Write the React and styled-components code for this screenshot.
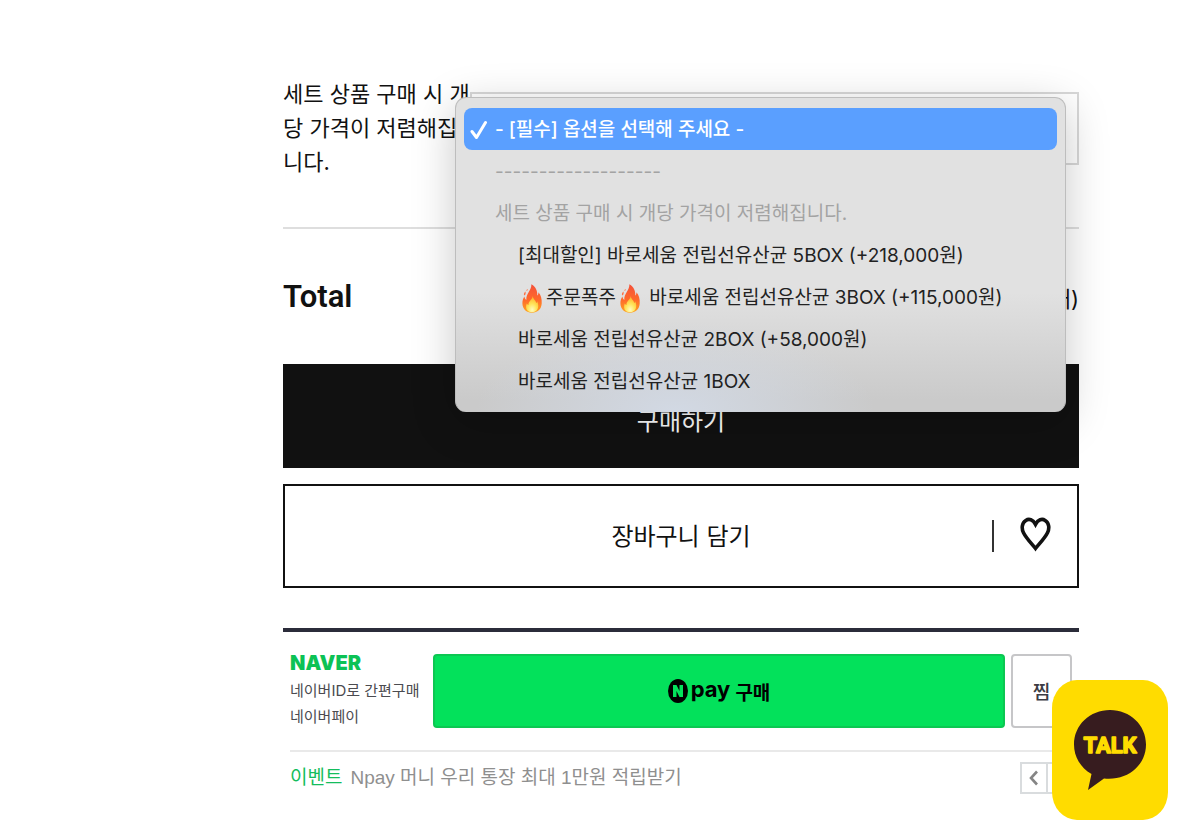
import React, { useState } from "react";
import styled, { createGlobalStyle } from "styled-components";

const sans = '"Inter", "Noto Sans CJK KR", sans-serif';

const GlobalStyle = createGlobalStyle`
  *, *::before, *::after { box-sizing: border-box; }
  body { margin: 0; background: #fff; color: #111; font-family: ${sans}; }
  button, select { font: inherit; color: inherit; margin: 0; padding: 0; border: 0; background: none; border-radius: 0; }
  button { cursor: pointer; }
`;

const Page = styled.main`
  padding: 77px 121px 38px 283px;
`;

const OptionRow = styled.div`
  display: grid;
  grid-template-columns: 187px 1fr;
  padding-bottom: 48px;
  border-bottom: 2px solid #dedede;
`;

const OptionLabel = styled.label`
  font-size: 22px;
  line-height: 34px;
  word-break: break-all;
`;

const OptionField = styled.div`
  position: relative;
  margin-top: 15px;
`;

const OptionSelect = styled.select`
  display: block;
  width: 100%;
  height: 73px;
  padding: 0 20px;
  border: 2px solid #d8d8d8;
  background: #fff;
  font-size: 19px;
  appearance: none;
`;

const Menu = styled.div`
  position: absolute;
  z-index: 2;
  top: 5px;
  left: -15px;
  right: 13px;
  padding: 10px 8px;
  border: 1px solid #bdbdbd;
  border-width: 1px 1px 0;
  border-radius: 11px;
  background:
    radial-gradient(ellipse 200px 90px at 36% 100%, #d2d9e4 0%, rgba(210, 217, 228, 0) 100%),
    linear-gradient(#e1e1e1 62%, #cacaca 96%);
  box-shadow: 0 10px 44px rgba(0, 0, 0, 0.22);
`;

const MenuItem = styled.button`
  display: flex;
  align-items: center;
  width: 100%;
  height: 42px;
  padding-top: 2px;
  padding-left: ${(p) => (p.$nested ? 54 : 31)}px;
  border-radius: 8px;
  font-size: 19px;
  font-weight: ${(p) => (p.$active ? 500 : 400)};
  line-height: 40px;
  white-space: pre;
  color: ${(p) => (p.$active ? "#fff" : "#222")};
  background: ${(p) => (p.$active ? "#5a9fff" : "transparent")};
  &:disabled { color: #a3a3a3; cursor: default; }
  svg { flex: none; }
`;

const CheckMark = styled.svg`
  width: 18px;
  height: 20px;
  margin: 0 7px 0 -25px;
`;

const FlameIcon = styled.svg`
  width: 20px;
  height: 29px;
  margin: 0 4px;
`;

const TotalRow = styled.div`
  display: flex;
  align-items: center;
  justify-content: space-between;
  height: 135px;
`;

const TotalTitle = styled.strong`
  font-family: "Roboto", sans-serif;
  font-size: 31px;
  font-weight: 600;
  line-height: 40px;
`;

const TotalCount = styled.span`
  font-size: 22px;
`;

const BuyButton = styled.button`
  display: block;
  width: 100%;
  height: 104px;
  padding-top: 6px;
  background: #111;
  color: #fff;
  font-size: 24px;
`;

const CartBar = styled.div`
  display: flex;
  height: 104px;
  margin-top: 16px;
  border: 2px solid #111;
`;

const CartButton = styled.button`
  flex: 1;
  padding-left: 85px;
  padding-bottom: 4px;
  font-size: 24px;
`;

const WishButton = styled.button`
  display: flex;
  align-items: center;
  width: 85px;
  &::before {
    content: "";
    width: 2px;
    height: 32px;
    margin-right: 26px;
    background: #333;
  }
`;

const NaverPay = styled.section`
  margin-top: 40px;
  padding: 22px 7px 0;
  border-top: 4px solid #2b2c3a;
`;

const PayRow = styled.div`
  display: grid;
  grid-template-columns: 137px 1fr 61px;
  grid-template-rows: 74px;
  gap: 6px;
`;

const PayIntro = styled.div`
  color: #4b4b50;
  font-size: 15px;
  line-height: 26px;
  white-space: nowrap;
`;

const NaverName = styled.strong`
  display: block;
  color: #0cc255;
  font-size: 20px;
  font-weight: 900;
  line-height: 18px;
  margin-bottom: 6px;
`;

const PayButton = styled.button`
  display: flex;
  align-items: center;
  justify-content: center;
  border: 2px solid #0cc752;
  border-radius: 4px;
  background: #03e15b;
  color: #000;
  font-size: 19px;
  font-weight: 700;
`;

const PayWord = styled.span`
  margin: 0 5px 4px 3px;
  font-size: 22px;
  line-height: 24px;
`;

const ZzimButton = styled.button`
  padding-bottom: 2px;
  border: 2px solid #c6c6c8;
  border-radius: 4px;
  color: #3c3c44;
  font-size: 19px;
  font-weight: 500;
`;

const EventRow = styled.div`
  display: flex;
  align-items: center;
  margin-top: 22px;
  padding-top: 10px;
  border-top: 2px solid #e9e9e9;
  font-family: "Liberation Sans", "Noto Sans CJK KR", sans-serif;
  font-size: 19px;
  line-height: 32px;
`;

const EventTag = styled.strong`
  margin-right: 8px;
  color: #14bd5c;
  font-weight: 400;
`;

const EventLink = styled.a`
  flex: 1;
  color: #8f8f8f;
  text-decoration: none;
`;

const Pager = styled.div`
  display: flex;
  border: 2px solid #d9dcde;
`;

const PagerButton = styled.button`
  display: grid;
  place-items: center;
  width: 24px;
  height: 28px;
  & + & { border-left: 2px solid #d9dcde; }
`;

const TalkButton = styled.button`
  position: fixed;
  z-index: 3;
  right: 32px;
  bottom: 12px;
  width: 116px;
  height: 140px;
  border-radius: 25px / 28px;
  background: #ffdc00;
  svg { display: block; }
`;

const groups = [
  { value: "", text: "- [필수] 옵션을 선택해 주세요 -" },
  { value: "line", text: "-------------------", disabled: true },
  { value: "group", text: "세트 상품 구매 시 개당 가격이 저렴해집니다.", disabled: true },
  { value: "5", text: "[최대할인] 바로세움 전립선유산균 5BOX (+218,000원)", nested: true },
  { value: "3", text: " 바로세움 전립선유산균 3BOX (+115,000원)", hot: "주문폭주", nested: true },
  { value: "2", text: "바로세움 전립선유산균 2BOX (+58,000원)", nested: true },
  { value: "1", text: "바로세움 전립선유산균 1BOX", nested: true },
];

function Flame({ id }) {
  return (
    <FlameIcon viewBox="0 0 20 29" aria-hidden="true">
      <defs>
        <linearGradient id={id} x1="0" y1="0" x2="0" y2="1">
          <stop offset="0" stopColor="#f4513a" />
          <stop offset="0.55" stopColor="#ff6a2b" />
          <stop offset="1" stopColor="#ffa51f" />
        </linearGradient>
        <radialGradient id={id + "core"} cx="0.5" cy="0.85" r="0.75">
          <stop offset="0" stopColor="#fffbc0" />
          <stop offset="0.5" stopColor="#ffe45a" />
          <stop offset="1" stopColor="#ffb52e" />
        </radialGradient>
      </defs>
      <path fill={`url(#${id})`} d="M9.400 0.300C14 3 15.500 7 15.300 11.500C16.300 10.700 16.500 9.500 16.400 8.200C19 11 20 15 19.700 19.500C19.300 25.300 15.500 28.700 10 28.700C4.300 28.700 .6 25 .4 19.500C.3 16.500 1.200 14.200 2.400 12.500C2.600 14 3.200 15.200 4.300 15.900C4 9.500 9.500 6.500 9.400.3Z" />
      <path fill="#ff7044" d="M2.200 11.500C1.400 9.500 2.300 8.300 3.600 7.400C3.500 9.200 4.200 10.300 2.200 11.500ZM4.600 7C4.300 5.800 4.900 5.200 5.600 4.900C5.700 6 5.500 6.600 4.600 7Z" />
      <path fill={`url(#${id}core)`} d="M10.700 12C11.200 15.500 14 16.500 14.200 19C14.900 18.600 15.100 17.900 15.100 17.200C17.800 22.500 15.800 28.200 10 28.200C4.500 28.200 3 23.500 4.800 19.400C5.200 20.300 5.800 20.700 6.500 20.900C6 17.500 10.500 15.500 10.700 12Z" />
    </FlameIcon>
  );
}

export default function App() {
  const [value, setValue] = useState("");
  return (
    <>
      <GlobalStyle />
      <Page>
        <OptionRow>
          <OptionLabel htmlFor="option">세트 상품 구매 시 개당 가격이 저렴해집니다.</OptionLabel>
          <OptionField>
            <OptionSelect id="option" value={value} onChange={(e) => setValue(e.target.value)}>
              {groups.map((o) => (
                <option key={o.value} value={o.value} disabled={o.disabled}>{(o.hot || "") + o.text}</option>
              ))}
            </OptionSelect>
            <Menu role="listbox" aria-label="옵션">
              {groups.map((o) => (
                <MenuItem
                  key={o.value}
                  type="button"
                  role="option"
                  aria-selected={o.value === value}
                  disabled={o.disabled}
                  $nested={o.nested}
                  $active={o.value === value}
                  onClick={() => setValue(o.value)}
                >
                  {o.value === value && (
                    <CheckMark viewBox="0 0 18 20" fill="none" stroke="currentColor" strokeWidth="3" strokeLinecap="round" strokeLinejoin="round" aria-hidden="true">
                      <path d="M2 11.500L6.500 17.500L15.500 2.500" />
                    </CheckMark>
                  )}
                  {o.hot && <><Flame id="flameA" />{o.hot}<Flame id="flameB" /></>}
                  {o.text}
                </MenuItem>
              ))}
            </Menu>
          </OptionField>
        </OptionRow>

        <TotalRow>
          <TotalTitle>Total</TotalTitle>
          <TotalCount>(0개)</TotalCount>
        </TotalRow>

        <BuyButton type="button">구매하기</BuyButton>
        <CartBar>
          <CartButton type="button">장바구니 담기</CartButton>
          <WishButton type="button" aria-label="관심상품">
            <svg width="31" height="39" viewBox="0 0 31 39" fill="none" stroke="#111" strokeWidth="3.600" aria-hidden="true">
              <path d="M15.500 7.300C13 2.500 9 1.300 5.800 3.400C1.700 6 1.400 11.500 3.500 15.800C6 21 11.500 26.500 15.500 31.500C19.500 26.500 25 21 27.500 15.800C29.600 11.500 29.300 6 25.200 3.400C22 1.300 18 2.500 15.500 7.300Z" />
            </svg>
          </WishButton>
        </CartBar>

        <NaverPay>
          <PayRow>
            <PayIntro>
              <NaverName>NAVER</NaverName>
              네이버ID로 간편구매<br />네이버페이
            </PayIntro>
            <PayButton type="button">
              <svg width="20" height="24" viewBox="0 0 20 24" aria-hidden="true">
                <ellipse cx="10" cy="12" rx="10" ry="12" fill="#000" />
                <path fill="#03e15b" d="M5 6H8.500L11.500 12V6H15V18H11.500L8.500 12V18H5Z" />
              </svg>
              <PayWord>pay</PayWord>구매
            </PayButton>
            <ZzimButton type="button">찜</ZzimButton>
          </PayRow>
          <EventRow>
            <EventTag>이벤트</EventTag>
            <EventLink href="#event">Npay 머니 우리 통장 최대 1만원 적립받기</EventLink>
            <Pager>
              <PagerButton type="button" aria-label="이전">
                <svg width="10" height="16" viewBox="0 0 10 16" fill="none" stroke="#858585" strokeWidth="2.600" aria-hidden="true"><path d="M8 1.500L2 8L8 14.500" /></svg>
              </PagerButton>
              <PagerButton type="button" aria-label="다음">
                <svg width="10" height="16" viewBox="0 0 10 16" fill="none" stroke="#858585" strokeWidth="2.600" aria-hidden="true"><path d="M2 1.500L8 8L2 14.500" /></svg>
              </PagerButton>
            </Pager>
          </EventRow>
        </NaverPay>
      </Page>

      <TalkButton type="button">
        <svg width="116" height="140" viewBox="0 0 116 140">
          <path fill="#371c1f" d="M58 30C38 30 22 45 22 64.500C22 77 28.500 87.500 39.500 94L36 110L52 98.500C76 101 94 85 94 64.500C94 45 78 30 58 30Z" />
          <text x="58" y="73" textAnchor="middle" fontFamily="Roboto, sans-serif" fontWeight="700" fontSize="22" fill="#ffdc00" stroke="#ffdc00" strokeWidth="1.500" strokeLinejoin="round">TALK</text>
        </svg>
      </TalkButton>
    </>
  );
}
